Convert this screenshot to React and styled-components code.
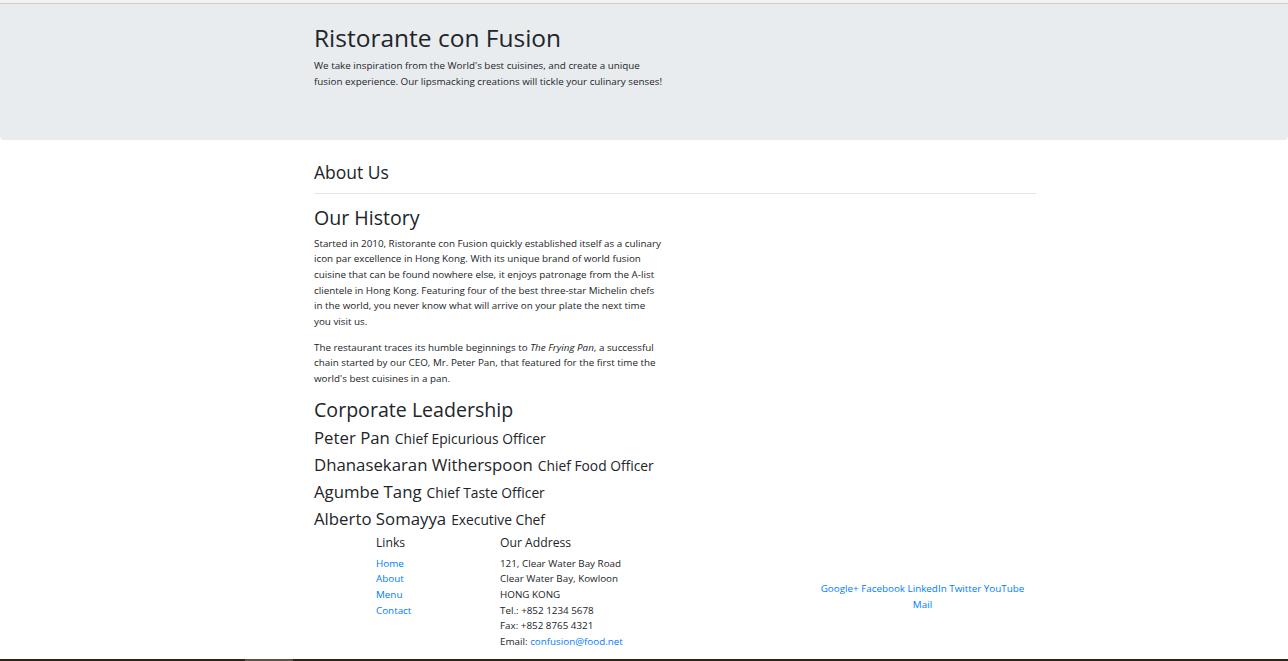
import React from 'react'
import styled, { createGlobalStyle } from 'styled-components'

const GlobalStyle = createGlobalStyle`
  body {
    margin: 0;
    background: #fff;
    color: #212529;
    font-family: 'Open Sans', 'Noto Sans', sans-serif;
    font-size: 9.83px;
    line-height: 15.6px;
  }
  a {
    color: #007bff;
    text-decoration: none;
  }
`

const leaders = [
  { name: 'Peter Pan', designation: 'Chief Epicurious Officer' },
  { name: 'Dhanasekaran Witherspoon', designation: 'Chief Food Officer' },
  { name: 'Agumbe Tang', designation: 'Chief Taste Officer' },
  { name: 'Alberto Somayya', designation: 'Executive Chef' }
]

const TopStrip = styled.div`
  height: 3px;
  background: #f2f2f2;
  border-bottom: 1px solid #cfcfcf;
`

const Jumbotron = styled.header`
  background: #e9ecef;
  border-radius: 0 0 4px 4px;
  padding: 18px 0 40px;
`

const Container = styled.div`
  width: 722px;
  margin-left: 314px;
`

const Half = styled.div`
  width: ${p => p.width || 352}px;
`

const Title = styled.h1`
  margin: 0 0 5px;
  font-size: 24.5px;
  line-height: 31px;
  font-weight: 400;
`

const Text = styled.p`
  margin: 0 0 10.4px;
`

const Main = styled(Container)`
  padding-top: 21px;
`

const PageTitle = styled.h3`
  margin: 0;
  font-size: 17.5px;
  line-height: 22px;
  font-weight: 400;
`

const Rule = styled.hr`
  margin: 10px 0 11px;
  border: 0;
  border-top: 1px solid #e5e5e5;
`

const Heading = styled.h2`
  margin: 0 0 6.2px;
  font-size: 19.6px;
  line-height: 25px;
  font-weight: 400;
`

const LeaderRow = styled.div`
  display: flex;
  align-items: baseline;
  gap: 5px;
  height: 27px;
  line-height: 20px;
  &:last-child {
    height: 26px;
  }
`

const LeaderName = styled.span`
  font-size: 16.8px;
`

const LeaderTitle = styled.span`
  font-size: 13.8px;
`

const Footer = styled.footer`
  display: grid;
  grid-template-columns: 124px 309px 247px;
  margin-left: 366px;
  width: 680px;
`

const FooterCol = styled.div`
  padding: 0 10px;
  align-self: ${p => (p.center ? 'center' : 'start')};
  text-align: ${p => (p.center ? 'center' : 'left')};
`

const FooterHeading = styled.h5`
  margin: 0 0 5.2px;
  font-size: 12.2px;
  line-height: 15.6px;
  font-weight: 400;
`

const LinkList = styled.ul`
  list-style: none;
  margin: 0;
  padding: 0;
`

const Address = styled.address`
  font-style: normal;
  margin-bottom: 9.5px;
`

const Social = styled.div`
  max-width: 216px;
  margin: 0 auto;
`

const BottomBar = styled.div`
  height: 6px;
  background: #2c2514;
`

const BarThumb = styled.div`
  width: 48px;
  height: 100%;
  margin-left: 245px;
  background: #5a5242;
`

export default function App() {
  return (
    <>
      <GlobalStyle />
      <TopStrip />
      <Jumbotron>
        <Container>
          <Half>
            <Title>Ristorante con Fusion</Title>
            <Text>
              We take inspiration from the World's best cuisines, and create a unique fusion
              experience. Our lipsmacking creations will tickle your culinary senses!
            </Text>
          </Half>
        </Container>
      </Jumbotron>
      <Main>
        <PageTitle>About Us</PageTitle>
        <Rule />
        <Half width={349}>
          <Heading>Our History</Heading>
          <Text>
            Started in 2010, Ristorante con Fusion quickly established itself as a culinary icon
            par excellence in Hong Kong. With its unique brand of world fusion cuisine that can be
            found nowhere else, it enjoys patronage from the A-list clientele in Hong Kong.
            Featuring four of the best three-star Michelin chefs in the world, you never know what
            will arrive on your plate the next time you visit us.
          </Text>
          <Text>
            The restaurant traces its humble beginnings to <em>The Frying Pan</em>, a successful
            chain started by our CEO, Mr. Peter Pan, that featured for the first time the world's
            best cuisines in a pan.
          </Text>
        </Half>
        <Heading>Corporate Leadership</Heading>
        {leaders.map((leader, index) => (
          <LeaderRow key={index}>
            <LeaderName>{leader.name}</LeaderName>
            <LeaderTitle>{leader.designation}</LeaderTitle>
          </LeaderRow>
        ))}
      </Main>
      <Footer>
        <FooterCol>
          <FooterHeading>Links</FooterHeading>
          <LinkList>
            <li><a href="#home">Home</a></li>
            <li><a href="#about">About</a></li>
            <li><a href="#menu">Menu</a></li>
            <li><a href="#contact">Contact</a></li>
          </LinkList>
        </FooterCol>
        <FooterCol>
          <FooterHeading>Our Address</FooterHeading>
          <Address>
            121, Clear Water Bay Road<br />
            Clear Water Bay, Kowloon<br />
            HONG KONG<br />
            Tel.: +852 1234 5678<br />
            Fax: +852 8765 4321<br />
            Email: <a href="mailto:confusion@food.net">confusion@food.net</a>
          </Address>
        </FooterCol>
        <FooterCol center>
          <Social>
            <a href="#g">Google+</a> <a href="#f">Facebook</a> <a href="#l">LinkedIn</a>{' '}
            <a href="#t">Twitter</a> <a href="#y">YouTube</a> <a href="#m">Mail</a>
          </Social>
        </FooterCol>
      </Footer>
      <BottomBar>
        <BarThumb />
      </BottomBar>
    </>
  )
}
